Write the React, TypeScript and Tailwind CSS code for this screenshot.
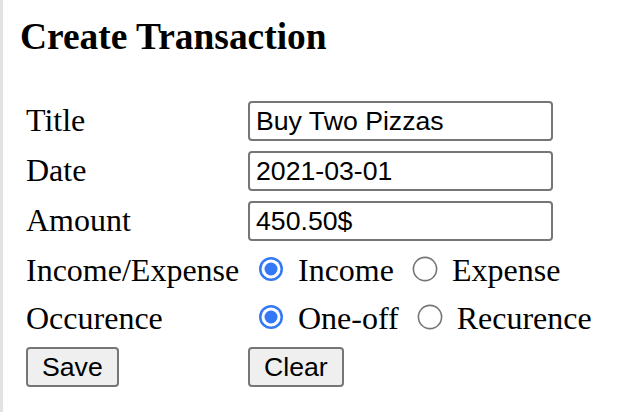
import { useState } from 'react';

const serif = "font-['Liberation_Serif','Times_New_Roman',serif]";
const sans = "font-['Liberation_Sans',Arial,sans-serif]";

function Radio({ checked, onClick }: { checked: boolean; onClick: () => void }) {
  return (
    <span onClick={onClick} className="ml-[10px] mr-[6px] mt-[3px] inline-block h-[26px] w-[26px] shrink-0 cursor-pointer">
      <svg width="26" height="26" viewBox="0 0 26 26">
        {checked ? (
          <>
            <circle cx="13" cy="13" r="12" fill="#3478f6" />
            <circle cx="13" cy="13" r="9.5" fill="#ffffff" />
            <circle cx="13" cy="13" r="6.5" fill="#3478f6" />
          </>
        ) : (
          <circle cx="13" cy="13" r="11.6" fill="#ffffff" stroke="#767676" strokeWidth="1.6" />
        )}
      </svg>
    </span>
  );
}

function TextField({ value }: { value: string }) {
  return (
    <input
      defaultValue={value}
      className={`${sans} box-border h-[40px] w-[305px] rounded-[4px] border-2 border-[#767676] bg-white px-[6px] text-[26.67px] text-black outline-none`}
    />
  );
}

const buttonClass = `${sans} h-[40px] rounded-[4px] border-2 border-[#767676] bg-[#efefef] px-[14px] text-[26.67px] leading-none text-black`;

export default function App() {
  const [kind, setKind] = useState('income');
  const [occurence, setOccurence] = useState('one-off');

  return (
    <div className={`${serif} min-h-[412px] w-[626px] border-l-[3px] border-[#e2e2e2] bg-white pl-[17px] pt-[15px] text-black`}>
      <h3 className="text-[37.44px] font-bold leading-[43px]">Create Transaction</h3>

      <div className="ml-[6px] mt-[43px] text-[32px]">
        <div className="flex h-[40px] items-start">
          <div className="w-[222px] pt-[2px] leading-[34px]">Title</div>
          <TextField value="Buy Two Pizzas" />
        </div>
        <div className="mt-[10px] flex h-[40px] items-start">
          <div className="w-[222px] pt-[2px] leading-[34px]">Date</div>
          <TextField value="2021-03-01" />
        </div>
        <div className="mt-[10px] flex h-[40px] items-start">
          <div className="w-[222px] pt-[2px] leading-[34px]">Amount</div>
          <TextField value="450.50$" />
        </div>

        <div className="mt-[10px] flex h-[34px] items-start pt-[2px] leading-[34px]">
          <div className="w-[222px]">Income/Expense</div>
          <div className="flex items-start">
            <Radio checked={kind === 'income'} onClick={() => setKind('income')} />
            <span className="ml-[8px]">Income</span>
            <span className="ml-[8px]" />
            <Radio checked={kind === 'expense'} onClick={() => setKind('expense')} />
            <span className="ml-[8px]">Expense</span>
          </div>
        </div>

        <div className="mt-[14px] flex h-[34px] items-start pt-[2px] leading-[34px]">
          <div className="w-[222px]">Occurence</div>
          <div className="flex items-start">
            <Radio checked={occurence === 'one-off'} onClick={() => setOccurence('one-off')} />
            <span className="ml-[8px]">One-off</span>
            <span className="ml-[8px]" />
            <Radio checked={occurence === 'recurence'} onClick={() => setOccurence('recurence')} />
            <span className="ml-[8px]">Recurence</span>
          </div>
        </div>

        <div className="mt-[14px] flex items-start">
          <div className="flex w-[222px]">
            <button className={buttonClass}>Save</button>
          </div>
          <button className={buttonClass}>Clear</button>
        </div>
      </div>
    </div>
  );
}
